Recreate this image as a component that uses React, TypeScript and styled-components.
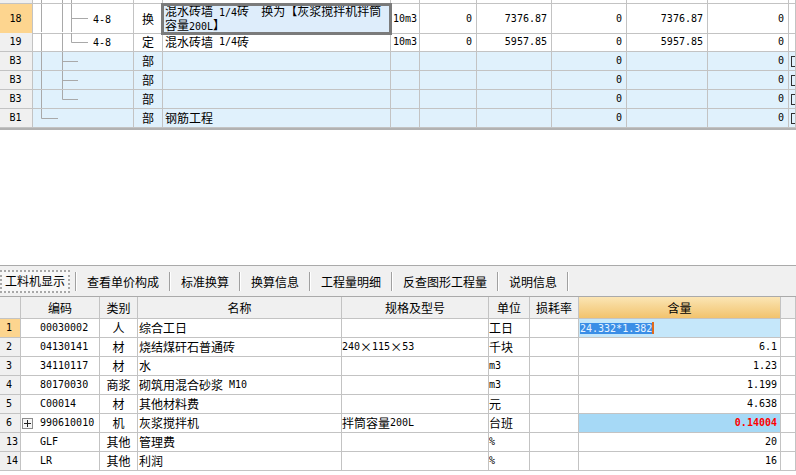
import React from 'react';
import styled, { createGlobalStyle, css } from 'styled-components';

const GlobalStyle = createGlobalStyle`
  *, *::before, *::after { box-sizing: border-box; }
  html, body { margin: 0; padding: 0; background: #fff; }
  body {
    font-family: "Noto Sans CJK SC", "Noto Sans", sans-serif;
    font-size: 12px;
    color: #000;
  }
`;

const LINE = '#c3c3c3';
const TREE = '#a9a9a9';

const Page = styled.div`
  width: 796px;
  height: 475px;
  overflow: hidden;
  display: flex;
  flex-direction: column;
  background: #fff;
`;

/* ---------- mixed latin / CJK text ---------- */
const Lat = styled.span`
  font-family: "DejaVu Sans Mono", "Liberation Mono", monospace;
  font-size: 10px;
`;
const Cjk = styled.span`
  font-family: "Noto Sans CJK SC", sans-serif;
  font-size: 12px;
`;
function Mixed({ text }: { text: string }) {
  const parts = text.match(/[\x20-\x7e]+|[^\x20-\x7e]+/g) || [];
  return (
    <>
      {parts.map((p, i) =>
        /^[\x20-\x7e]+$/.test(p) ? <Lat key={i}>{p}</Lat> : <Cjk key={i}>{p}</Cjk>
      )}
    </>
  );
}

/* ---------- generic cell ---------- */
type Align = 'left' | 'center' | 'right';
const Cell = styled.div<{ $align?: Align; $pl?: number; $pr?: number; $bg?: string }>`
  position: relative;
  display: flex;
  align-items: center;
  justify-content: ${(p) =>
    p.$align === 'center' ? 'center' : p.$align === 'right' ? 'flex-end' : 'flex-start'};
  padding-left: ${(p) => p.$pl ?? 2}px;
  padding-right: ${(p) => p.$pr ?? 3}px;
  border-right: 1px solid ${LINE};
  border-bottom: 1px solid ${LINE};
  white-space: pre;
  overflow: hidden;
  line-height: 12px;
  ${(p) => p.$bg && css`background: ${p.$bg};`}
`;

const RowHead = styled(Cell)<{ $sel?: boolean }>`
  background: ${(p) => (p.$sel ? '#fdd58f' : '#f0f0f0')};
`;

/* ---------- top grid ---------- */
const TopPane = styled.div`
  height: 265px;
  flex: none;
  background: #fff;
`;
const TopGrid = styled.div`
  border-bottom: 2px solid #b2b2b2;
`;
const TopRow = styled.div<{ $h: number; $blue?: boolean }>`
  display: grid;
  grid-template-columns: 33px 101px 29px 228px 29px 57px 75px 75px 81px 81px 7px;
  height: ${(p) => p.$h}px;
  background: ${(p) => (p.$blue ? '#e0f1fc' : '#fff')};
`;
const NameCell = styled(Cell)<{ $picked?: boolean }>`
  ${(p) =>
    p.$picked &&
    css`
      overflow: visible;
      z-index: 1;
      background: #deedfb;
      align-items: flex-start;
      padding-top: 0px;
      &::after {
        content: '';
        position: absolute;
        left: -2px;
        right: -2px;
        top: -1px;
        bottom: -2px;
        border: 3px solid #7b7b7b;
      }
    `}
`;
const TwoLines = styled.div`
  display: flex;
  flex-direction: column;
  line-height: 12px;
  padding-top: 1px;
`;
const CheckEdge = styled.div`
  width: 11px;
  height: 11px;
  flex: none;
  border: 1px solid #303030;
  margin-left: 2px;
`;
const TreeSvg = styled.svg`
  position: absolute;
  left: 0;
  top: 0;
  pointer-events: none;
`;
const CodeText = styled.div<{ $indent: number }>`
  padding-left: ${(p) => p.$indent}px;
`;

type TreeSpec = { v: Array<[number, 'full' | 'half']>; h?: [number, number] };

function Tree({ spec, h }: { spec: TreeSpec; h: number }) {
  const inner = h - 1;
  const mid = Math.floor(inner / 2) + 0.5;
  return (
    <TreeSvg width={100} height={inner}>
      {spec.v.map(([x, k], i) => (
        <line key={i} x1={x} x2={x} y1={0} y2={k === 'full' ? inner : mid} stroke={TREE} />
      ))}
      {spec.h && <line x1={spec.h[0]} x2={spec.h[1]} y1={mid} y2={mid} stroke={TREE} />}
    </TreeSvg>
  );
}

type TopData = {
  key: string;
  h: number;
  head: string;
  sel?: boolean;
  blue?: boolean;
  tree: TreeSpec;
  code?: string;
  type?: string;
  name?: string[];
  picked?: boolean;
  unit?: string;
  vals: string[];
  check?: boolean;
};

const A = 8.5, B = 29.5, C = 38.5;
const topRows: TopData[] = [
  { key: 'p', h: 4, head: '', tree: { v: [[A, 'full'], [B, 'full'], [C, 'full']] }, vals: ['', '', '', '', ''] },
  {
    key: '18', h: 29, head: '18', sel: true,
    tree: { v: [[A, 'full'], [B, 'full'], [C, 'full']], h: [C, 55] },
    code: '4-8', type: '换',
    name: ['混水砖墙 1/4砖  换为【灰浆搅拌机拌筒', '容量200L】'], picked: true,
    unit: '10m3', vals: ['0', '7376.87', '0', '7376.87', '0'],
  },
  {
    key: '19', h: 19, head: '19',
    tree: { v: [[A, 'full'], [B, 'full'], [C, 'half']], h: [C, 55] },
    code: '4-8', type: '定', name: ['混水砖墙 1/4砖'],
    unit: '10m3', vals: ['0', '5957.85', '0', '5957.85', '0'],
  },
  { key: 'b3a', h: 19, head: 'B3', blue: true, check: true, tree: { v: [[A, 'full'], [B, 'full']], h: [B, 45] }, type: '部', vals: ['', '', '0', '', '0'] },
  { key: 'b3b', h: 19, head: 'B3', blue: true, check: true, tree: { v: [[A, 'full'], [B, 'full']], h: [B, 45] }, type: '部', vals: ['', '', '0', '', '0'] },
  { key: 'b3c', h: 19, head: 'B3', blue: true, check: true, tree: { v: [[A, 'full'], [B, 'half']], h: [B, 45] }, type: '部', vals: ['', '', '0', '', '0'] },
  { key: 'b1', h: 19, head: 'B1', blue: true, check: true, tree: { v: [[A, 'half']], h: [A, 25] }, type: '部', name: ['钢筋工程'], vals: ['', '', '0', '', '0'] },
];

function TopTable() {
  return (
    <TopGrid>
      {topRows.map((r) => (
        <TopRow key={r.key} $h={r.h} $blue={r.blue}>
          <RowHead $sel={r.sel} $align="center" $pl={0} $pr={1}>
            {r.head && <Lat>{r.head}</Lat>}
          </RowHead>
          <Cell $pl={0}>
            <Tree spec={r.tree} h={r.h} />
            {r.code && (
              <CodeText $indent={60}>
                <Lat>{r.code}</Lat>
              </CodeText>
            )}
          </Cell>
          <Cell $align="center" $pl={0} $pr={0}>
            {r.type}
          </Cell>
          <NameCell $picked={r.picked}>
            {r.name &&
              (r.name.length > 1 ? (
                <TwoLines>
                  {r.name.map((l, i) => (
                    <div key={i}>
                      <Mixed text={l} />
                    </div>
                  ))}
                </TwoLines>
              ) : (
                <Mixed text={r.name[0]} />
              ))}
          </NameCell>
          <Cell $pl={2}>{r.unit && <Lat>{r.unit}</Lat>}</Cell>
          {r.vals.map((v, i) => (
            <Cell key={i} $align="right" $pr={4}>
              {v && <Lat>{v}</Lat>}
            </Cell>
          ))}
          <Cell $pl={0} $pr={0}>{r.check && <CheckEdge />}</Cell>
        </TopRow>
      ))}
    </TopGrid>
  );
}

/* ---------- tabs ---------- */
const TabBar = styled.div`
  flex: none;
  display: flex;
  align-items: center;
  height: 31px;
  padding-top: 2px;
  border-top: 1px solid #aaaaaa;
  background: #f0f0f0;
`;
const Tab = styled.div<{ $active?: boolean }>`
  flex: none;
  display: flex;
  align-items: center;
  justify-content: center;
  height: 23px;
  line-height: 14px;
  white-space: nowrap;
  padding: 0 10px;
  ${(p) =>
    p.$active &&
    css`
      width: 70px;
      padding: 0;
      margin-right: 5px;
      background: #f7f7f7;
      border: 2px dotted #a8a8a8;
      margin-top: -2px;
    `}
`;
const TabSep = styled.div`
  flex: none;
  width: 2px;
  height: 19px;
  margin-top: -2px;
  border-left: 1px solid #a0a0a0;
  border-right: 1px solid #ffffff;
`;

const tabs = ['工料机显示', '查看单价构成', '标准换算', '换算信息', '工程量明细', '反查图形工程量', '说明信息'];

function Tabs() {
  return (
    <TabBar>
      {tabs.map((t, i) => (
        <React.Fragment key={t}>
          <Tab $active={i === 0}>{t}</Tab>
          <TabSep />
        </React.Fragment>
      ))}
    </TabBar>
  );
}

/* ---------- bottom grid ---------- */
const BottomGrid = styled.div`
  flex: none;
  border-top: 1px solid #aaaaaa;
`;
const BotRow = styled.div<{ $head?: boolean }>`
  display: grid;
  grid-template-columns: 21px 79px 38px 204px 147px 41px 49px 202px 15px;
  height: ${(p) => (p.$head ? 22 : 19)}px;
  background: ${(p) => (p.$head ? '#f0f0f0' : '#fff')};
`;
const HeadCell = styled(Cell)<{ $hot?: boolean }>`
  padding-top: 1px;
  ${(p) =>
    p.$hot &&
    css`
      background: linear-gradient(#fbe5b4, #f2c36d);
    `}
`;
const ValCell = styled(Cell)<{ $tone?: 'edit' | 'hot' }>`
  ${(p) => p.$tone === 'edit' && css`background: #c5e7fa;`}
  ${(p) => p.$tone === 'hot' && css`background: #a6d9f6;`}
`;
const HotNum = styled(Lat)`
  color: #ff0000;
  font-weight: bold;
`;
const EditSel = styled(Lat)`
  background: #3a8ee6;
  color: #e8f3ff;
  line-height: 11px;
`;
const Caret = styled.span`
  display: inline-block;
  width: 2px;
  height: 12px;
  background: #e06a1c;
`;
const ExpandSlot = styled.div`
  width: 18px;
  flex: none;
  display: flex;
  align-items: center;
`;
const ExpandBox = styled.div`
  width: 11px;
  height: 11px;
  border: 1px solid #8c8c8c;
  background: #f6f6f6;
  display: flex;
  align-items: center;
  justify-content: center;
`;

type BotData = {
  no: string;
  code: string;
  type: string;
  name: string;
  spec?: string;
  unit: string;
  qty: string;
  sel?: boolean;
  tone?: 'edit' | 'hot';
  expand?: boolean;
};

const botRows: BotData[] = [
  { no: '1', code: '00030002', type: '人', name: '综合工日', unit: '工日', qty: '24.332*1.382', sel: true, tone: 'edit' },
  { no: '2', code: '04130141', type: '材', name: '烧结煤矸石普通砖', spec: '240×115×53', unit: '千块', qty: '6.1' },
  { no: '3', code: '34110117', type: '材', name: '水', unit: 'm3', qty: '1.23' },
  { no: '4', code: '80170030', type: '商浆', name: '砌筑用混合砂浆 M10', unit: 'm3', qty: '1.199' },
  { no: '5', code: 'C00014', type: '材', name: '其他材料费', unit: '元', qty: '4.638' },
  { no: '6', code: '990610010', type: '机', name: '灰浆搅拌机', spec: '拌筒容量200L', unit: '台班', qty: '0.14004', tone: 'hot', expand: true },
  { no: '13', code: 'GLF', type: '其他', name: '管理费', unit: '%', qty: '20' },
  { no: '14', code: 'LR', type: '其他', name: '利润', unit: '%', qty: '16' },
];

const headers = ['', '编码', '类别', '名称', '规格及型号', '单位', '损耗率', '含量', ''];

function BottomTable() {
  return (
    <BottomGrid>
      <BotRow $head>
        {headers.map((h, i) => (
          <HeadCell key={i} $align="center" $pl={0} $pr={0} $hot={i === 7}>
            {h}
          </HeadCell>
        ))}
      </BotRow>
      {botRows.map((r) => (
        <BotRow key={r.no}>
          <RowHead $sel={r.sel} $pl={6}>
            <Lat>{r.no}</Lat>
          </RowHead>
          <Cell $pl={1}>
            <ExpandSlot>
              {r.expand && (
                <ExpandBox>
                  <svg width="9" height="9" viewBox="0 0 9 9">
                    <path d="M1 4.5H8M4.5 1V8" stroke="#222" strokeWidth="1" />
                  </svg>
                </ExpandBox>
              )}
            </ExpandSlot>
            <Lat>{r.code}</Lat>
          </Cell>
          <Cell $align="center" $pl={0} $pr={0}>
            {r.type}
          </Cell>
          <Cell $pl={1}>
            <Mixed text={r.name} />
          </Cell>
          <Cell $pl={0}>{r.spec && <Mixed text={r.spec} />}</Cell>
          <Cell $pl={0}>
            <Mixed text={r.unit} />
          </Cell>
          <Cell />
          {r.tone === 'edit' ? (
            <ValCell $tone="edit" $pl={1}>
              <EditSel>{r.qty}</EditSel>
              <Caret />
            </ValCell>
          ) : (
            <ValCell $tone={r.tone} $align="right" $pr={3}>
              {r.tone === 'hot' ? <HotNum>{r.qty}</HotNum> : <Lat>{r.qty}</Lat>}
            </ValCell>
          )}
          <Cell />
        </BotRow>
      ))}
    </BottomGrid>
  );
}

export default function App() {
  return (
    <>
      <GlobalStyle />
      <Page>
        <TopPane>
          <TopTable />
        </TopPane>
        <Tabs />
        <BottomTable />
      </Page>
    </>
  );
}
